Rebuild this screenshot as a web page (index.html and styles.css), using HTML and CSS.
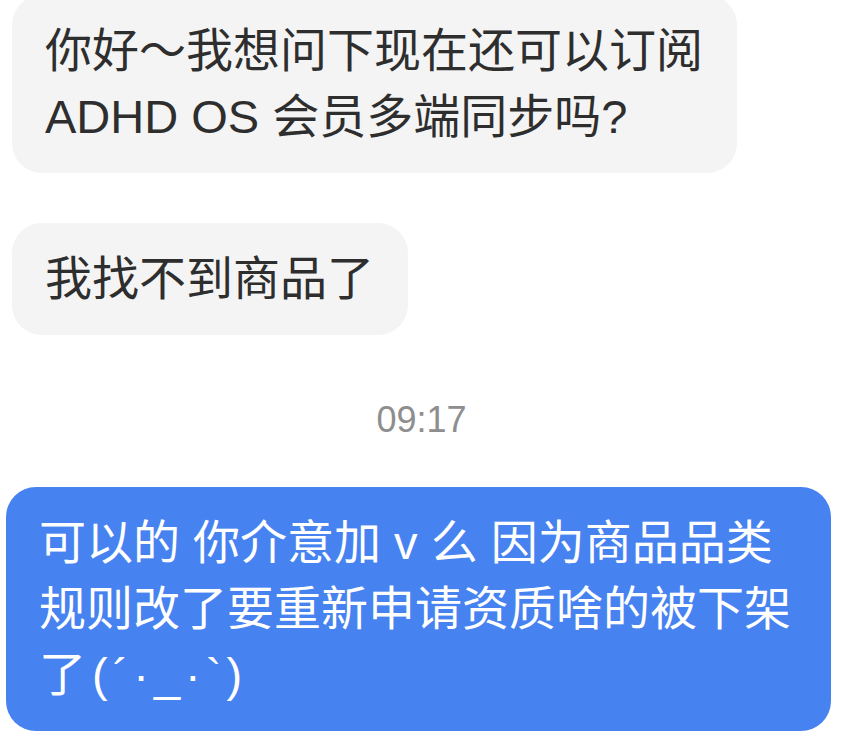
FILE: index.html
```html
<!DOCTYPE html>
<html lang="zh-CN">
  <head>
    <meta charset="UTF-8" />
    <meta name="viewport" content="width=device-width, initial-scale=1.0" />
    <title>聊天</title>
    <link rel="stylesheet" href="styles.css">
  </head>
  <body>
    <div class="chat">
      <div class="bubble incoming first">你好～我想问下现在还可以订阅<br>ADHD OS 会员多端同步吗?</div>
      <div class="bubble incoming">我找不到商品了</div>
      <p class="time">09:17</p>
      <div class="bubble outgoing">可以的 你介意加 v 么 因为商品品类<br>规则改了要重新申请资质啥的被下架<br>了<span class="kaomoji">(´·_·`)</span></div>
    </div>
  </body>
</html>
```

FILE: styles.css
```css
body{
  margin: 0;
  background-color: white;
  font-family: "Liberation Sans", "Noto Sans CJK SC", sans-serif;
}
.chat{
  display: flex;
  flex-direction: column;
}
.bubble{
  font-size: 47px;
  line-height: 66px;
  padding: 23px 34px 23px 33px;
  border-radius: 30px;
}
.incoming{
  align-self: flex-start;
  margin-left: 12px;
  margin-bottom: 50px;
  background-color: #f4f4f4;
  color: #2e2e2e;
}
.first{
  margin-top: -5px;
}
.incoming + .time{
  margin-top: 10px;
}
.time{
  align-self: center;
  margin: 0 0 42px 0;
  font-size: 36px;
  line-height: 50px;
  color: #8e8e8e;
}
.outgoing{
  align-self: flex-end;
  margin-right: 12px;
  padding-right: 40px;
  background-color: #4782f1;
  color: white;
}
.kaomoji{
  margin-left: 6px;
  letter-spacing: 5px;
}
```
